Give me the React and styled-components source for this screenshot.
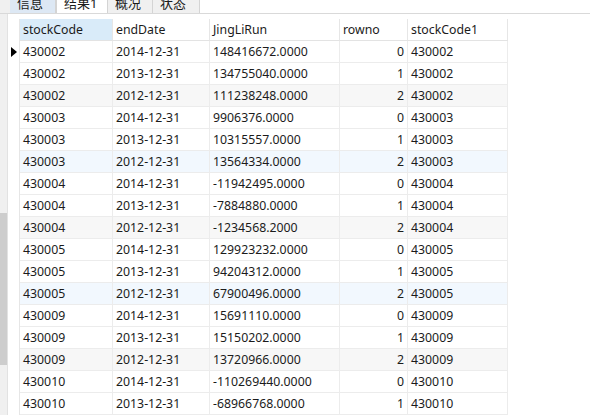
import React from "react";
import styled, { createGlobalStyle } from "styled-components";

const GlobalStyle = createGlobalStyle`
  html, body {
    margin: 0;
    padding: 0;
    background: #ffffff;
  }
  body {
    font-family: "Noto Sans", "Noto Sans CJK SC", sans-serif;
    font-size: 12.3px;
    color: #1b1b1b;
  }
`;

const columns = [
  { key: "stockCode", width: 93 },
  { key: "endDate", width: 97 },
  { key: "JingLiRun", width: 130 },
  { key: "rowno", width: 68, align: "right" },
  { key: "stockCode1", width: 100 },
];

const raw = [
  ["430002", "2014-12-31", "148416672.0000", 0],
  ["430002", "2013-12-31", "134755040.0000", 1],
  ["430002", "2012-12-31", "111238248.0000", 2],
  ["430003", "2014-12-31", "9906376.0000", 0],
  ["430003", "2013-12-31", "10315557.0000", 1],
  ["430003", "2012-12-31", "13564334.0000", 2],
  ["430004", "2014-12-31", "-11942495.0000", 0],
  ["430004", "2013-12-31", "-7884880.0000", 1],
  ["430004", "2012-12-31", "-1234568.2000", 2],
  ["430005", "2014-12-31", "129923232.0000", 0],
  ["430005", "2013-12-31", "94204312.0000", 1],
  ["430005", "2012-12-31", "67900496.0000", 2],
  ["430009", "2014-12-31", "15691110.0000", 0],
  ["430009", "2013-12-31", "15150202.0000", 1],
  ["430009", "2012-12-31", "13720966.0000", 2],
  ["430010", "2014-12-31", "-110269440.0000", 0],
  ["430010", "2013-12-31", "-68966768.0000", 1],
];

const rows = raw.map(([code, date, jlr, no]) => ({
  stockCode: code,
  endDate: date,
  JingLiRun: jlr,
  rowno: no,
  stockCode1: code,
}));

const tabs = [
  { label: "信息", tone: "blue", width: 46 },
  { label: "结果1", tone: "active", width: 52 },
  { label: "概况", tone: "plain", width: 45 },
  { label: "状态", tone: "plain", width: 47 },
];

const tabBg = { blue: "#dde8f4", active: "#ffffff", plain: "#f0f0f0" };

export default function App() {
  return (
    <>
      <GlobalStyle />
      <Page>
        <TabBar>
          <TabSpacer />
          {tabs.map((t) => (
            <Tab key={t.label} $tone={t.tone} $w={t.width}>
              {t.label}
            </Tab>
          ))}
        </TabBar>
        <Body>
          <Gutter>
            <Thumb />
          </Gutter>
          <Grid>
            <HeaderRow>
              <Indicator />
              {columns.map((c, i) => (
                <HeaderCell key={c.key} $w={c.width} $selected={i === 0}>
                  {c.key}
                </HeaderCell>
              ))}
            </HeaderRow>
            {rows.map((r, i) => {
              const n = i + 1;
              const tone = n % 3 !== 0 ? "none" : (n / 3) % 2 === 1 ? "gray" : "blue";
              return (
                <Row key={i}>
                  <Indicator>{i === 0 && <Arrow />}</Indicator>
                  {columns.map((c) => (
                    <Cell key={c.key} $w={c.width} $align={c.align} $tone={tone}>
                      {r[c.key]}
                    </Cell>
                  ))}
                </Row>
              );
            })}
          </Grid>
        </Body>
      </Page>
    </>
  );
}

const Page = styled.div`
  width: 590px;
  height: 415px;
  overflow: hidden;
  display: flex;
  flex-direction: column;
`;

const TabBar = styled.div`
  height: 13px;
  flex: none;
  display: flex;
  align-items: flex-end;
  overflow: hidden;
  border-bottom: 1px solid #d9d9d9;
  background: #ffffff;
`;

const TabSpacer = styled.div`
  width: 10px;
  height: 100%;
  background: #f0f0f0;
`;

const Tab = styled.div`
  flex: none;
  width: ${(p) => p.$w}px;
  height: 20px;
  box-sizing: border-box;
  padding: 0 7px;
  line-height: 20px;
  white-space: nowrap;
  overflow: hidden;
  font-family: "Noto Sans", "Noto Sans CJK SC", sans-serif;
  font-size: 13px;
  background: ${(p) => tabBg[p.$tone]};
  border-right: 1px solid #d4d4d4;
  border-left: ${(p) => (p.$tone === "active" ? "1px solid #d4d4d4" : "none")};
`;

const Body = styled.div`
  flex: 1;
  display: flex;
  min-height: 0;
`;

const Gutter = styled.div`
  width: 7px;
  flex: none;
  background: #f0f0f0;
  border-right: 1px solid #e2e2e2;
  padding-top: 199px;
`;

const Thumb = styled.div`
  height: 152px;
  background: #cdcdcd;
`;

const Grid = styled.div`
  padding-top: 5px;
  display: flex;
  flex-direction: column;
`;

const HeaderRow = styled.div`
  display: flex;
  height: 22px;
`;

const Row = styled.div`
  display: flex;
  height: 22px;
`;

const Indicator = styled.div`
  width: 11px;
  flex: none;
  display: flex;
  align-items: center;
  justify-content: center;
  border-right: 1px solid #e6e6e6;
`;

const Arrow = styled.div`
  width: 0;
  height: 0;
  border-top: 5px solid transparent;
  border-bottom: 5px solid transparent;
  border-left: 6px solid #000000;
  margin-left: 1px;
`;

const HeaderCell = styled.div`
  width: ${(p) => p.$w}px;
  box-sizing: border-box;
  flex: none;
  padding: 0 3px;
  display: flex;
  align-items: center;
  background: ${(p) => (p.$selected ? "#d9ebf9" : "#ffffff")};
  border-right: 1px solid #e6e6e6;
  border-bottom: 1px solid #e3e3e3;
  white-space: nowrap;
  overflow: hidden;
`;

const cellBg = { none: "#ffffff", gray: "#f7f7f7", blue: "#f2f8fe" };

const Cell = styled.div`
  width: ${(p) => p.$w}px;
  box-sizing: border-box;
  flex: none;
  padding: 0 3px;
  display: flex;
  align-items: center;
  justify-content: ${(p) => (p.$align === "right" ? "flex-end" : "flex-start")};
  background: ${(p) => cellBg[p.$tone]};
  border-right: 1px solid #ececec;
  border-bottom: 1px solid #ececec;
  white-space: nowrap;
  overflow: hidden;
`;
